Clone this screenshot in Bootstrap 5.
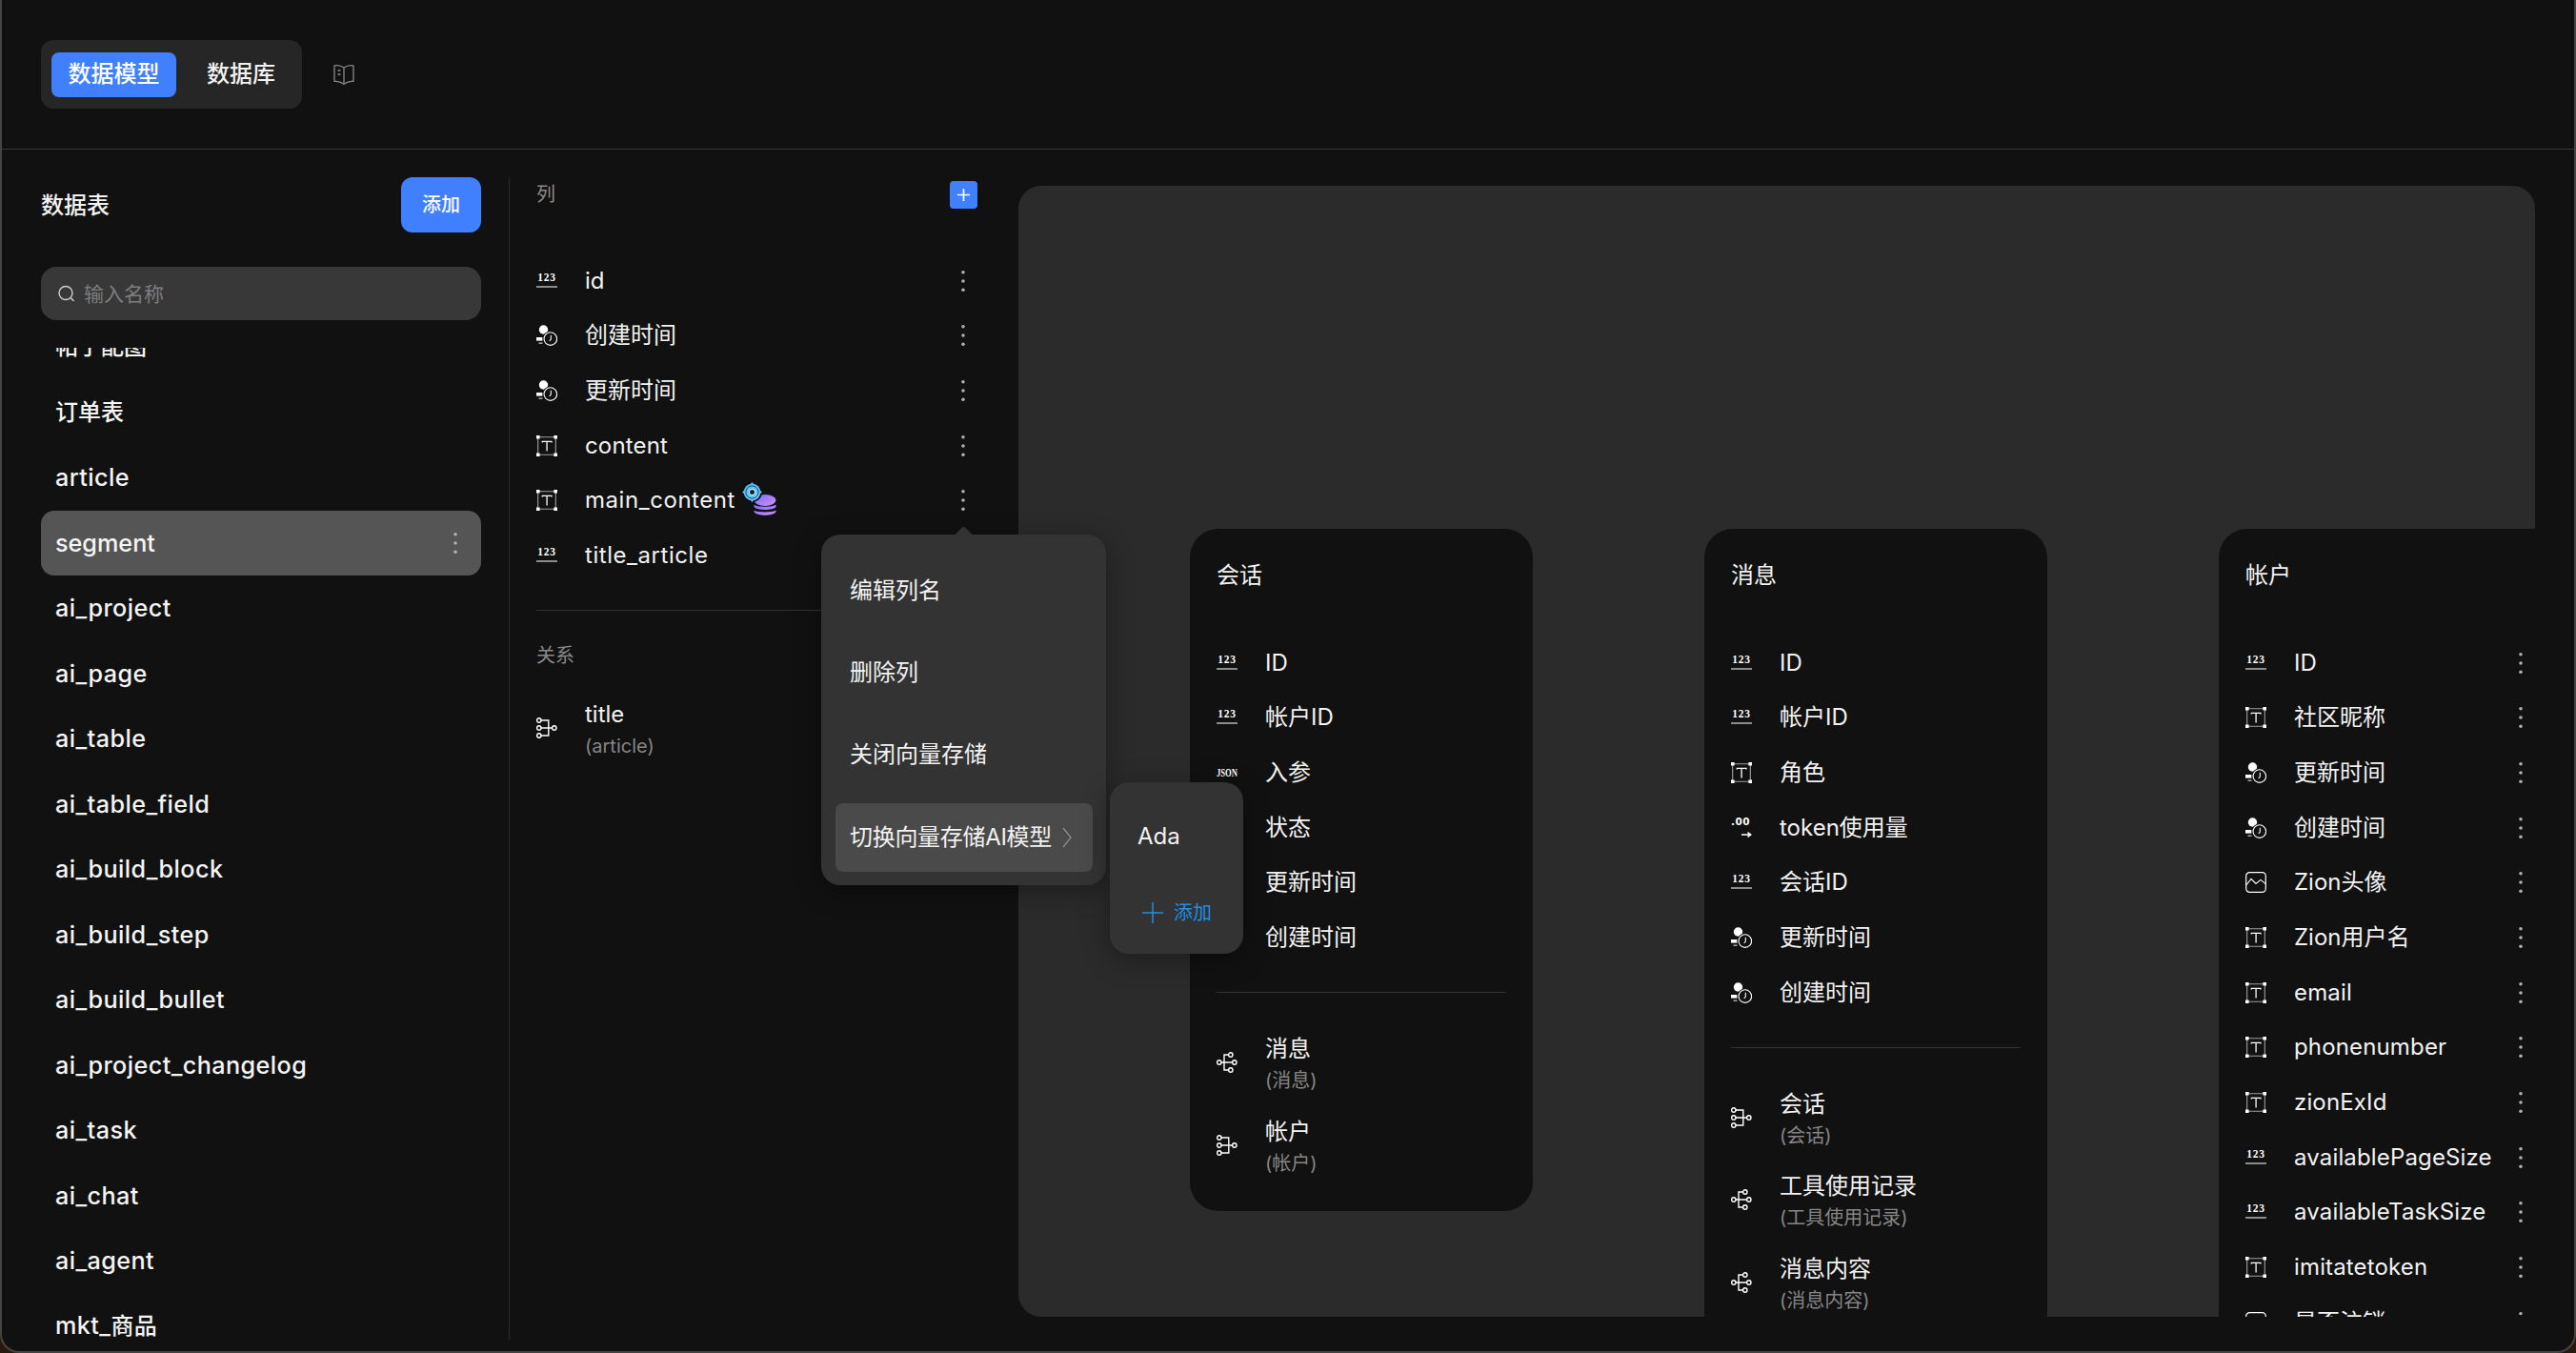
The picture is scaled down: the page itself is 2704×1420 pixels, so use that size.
<!DOCTYPE html>
<html lang="zh-CN">
<head>
<meta charset="utf-8">
<title>数据模型</title>
<link href="https://cdn.jsdelivr.net/npm/bootstrap@5.3.0/dist/css/bootstrap.min.css" rel="stylesheet">
<style>
html,body{height:100%;margin:0;overflow:hidden;background:#2a1808;}
body{font-family:Inter,"Noto Sans CJK SC",sans-serif;color:#f2f2f2;font-size:24px;line-height:34px;}
.appwin{position:relative;width:2704px;height:1420px;background:#111;border:2px solid #454545;border-top:0;border-radius:0 0 20px 20px;overflow:hidden;}
.topbar{height:157px;border-bottom:1px solid #383838;padding-left:41px;}
.segbox{width:274px;height:72px;background:#262626;border-radius:13px;padding:13px 11px;gap:0;}
.segbox .nav-link{height:47px;padding:0;font-size:24px;line-height:46px;font-weight:500;color:#f2f2f2;text-align:center;border-radius:8px;}
.segbox .nav-link.active{width:131px;background:#4080ff;color:#fff;}
.segbox .nav-link.tab-two{width:121px;padding-left:32px;text-align:left;}
.bookico{width:22px;height:22px;margin-left:33px;margin-top:-1px;}
.work{height:1261px;}
.sidepane{width:533px;flex:none;padding-top:29px;position:relative;}
.sidepane::after{content:"";position:absolute;right:0;top:0;margin-top:29px;bottom:12px;width:1px;background:#2b2b2b;}
.sidehead{margin:0 30px 0 41px;height:58px;}
.sidetitle{font-size:24px;font-weight:500;padding-top:2px;}
.btn.addbtn{width:84px;height:58px;padding:0;font-size:20px;font-weight:500;background:#4080ff;border:0;border-radius:12px;color:#fff;}
.searchbox{margin:36px 30px 0 41px;height:56px;background:#383838;border-radius:16px;padding-left:18px;gap:9px;}
.searchbox .form-control{background:transparent;border:0;padding:0;box-shadow:none;font-size:21px;color:#f2f2f2;height:55px;}
.searchbox .form-control::placeholder{color:#7d7d7d;}
.tablelist{margin:29px 30px 0 41px;height:1060px;overflow:hidden;}
.tablelist .list-group{margin-top:-35px;}
.tablelist .list-group-item{height:68.5px;background:transparent;border:0;color:#f4f4f4;padding:0 24px 0 15px;font-weight:500;font-size:25.2px;border-radius:14px;}
.tablelist .list-group-item.active{background:#555;height:68px;margin-bottom:.5px;margin-top:0;color:#f4f4f4;}
.tablelist .cjkname{font-size:24px;}
.tablelist .wide-us{letter-spacing:.42px;}
.colpane{width:534px;flex:none;padding:33px 43px 0 28px;}
.panelabel{font-size:20px;color:#8a8a8a;height:29px;line-height:29px;}
.plusbtn{width:29px;height:29px;background:#4080ff;border-radius:4px;}
.fieldrow{height:57.67px;gap:29px;}
.fieldrow .fieldname{flex:1;min-width:0;white-space:nowrap;}
.fieldname.latn{letter-spacing:.15px;}
.fieldname.wide-us{letter-spacing:.55px;}
.ico{width:22px;height:22px;flex:none;}
.dotsico{width:30px;height:22px;flex:none;}
.firstrow{margin-top:47px;}
.rule{height:1px;background:#333;opacity:1;border:0;margin:0;}
.colpane .rule{margin-top:28px;}
.rellabel{margin-top:33px;}
.relrows{margin-top:20px;}
.relrow{height:86.5px;gap:29px;}
.relrow .ico{margin-top:-5px;}
.relrow .reltitle{line-height:34px;}
.relrow .relsub{line-height:33px;font-size:20px;color:#858585;}
.vecico{width:36px;height:36px;margin-left:7px;margin-top:-6px;vertical-align:middle;}
.canvaswrap{flex:1;min-width:0;padding:38px 41px 36px 0;}
.canvasbox{height:100%;background:#2b2b2b;border-radius:24px;overflow:hidden;padding:360px 0 0 180px;gap:180px;align-items:flex-start;}
.card.modelcard{width:360px;flex:none;background:#111;border:0;border-radius:30px;padding:31px 28px 24px;color:#f2f2f2;}
.modeltitle{height:34px;line-height:36px;font-size:24px;margin-bottom:47px;}
.modelcard .rule{margin:28px 0 32.5px;}
.dropdown-menu.popmain{display:block;position:absolute;left:860px;top:561px;width:299px;height:368px;min-width:0;background:#333;border:0;border-radius:20px;padding:23px 14px 15px 15px;margin:0;box-shadow:0 6px 28px rgba(0,0,0,.35);}
.dropdown-menu.popmain::before{content:"";position:absolute;left:142px;top:-6px;width:15px;height:15px;background:#333;transform:rotate(45deg);border-radius:3px;}
.popmain .dropdown-item,.popsub .dropdown-item{color:#f2f2f2;font-size:24px;padding:0 0 0 15px;height:72px;margin-bottom:14.2px;border-radius:8px;background:transparent;}
.popmain .dropdown-item:last-child{margin-bottom:0;background:#4a4a4a;position:relative;letter-spacing:-.3px;}
.popchev{width:10px;height:22px;margin-left:11px;}
.dropdown-menu.popsub{display:block;position:absolute;left:1163px;top:821px;width:140px;height:180px;min-width:0;background:#333;border:0;border-radius:20px;padding:21px 0 0;margin:0;box-shadow:0 6px 28px rgba(0,0,0,.35);}
.popsub .dropdown-item{padding-left:29px;height:72px;margin:0;}
.popsub .addline{height:60px;margin-top:14px;padding-left:34px;gap:11px;color:#1e8fe6;font-size:20px;}
.plusthin{width:22px;height:22px;}
</style>
</head>
<body>
<svg width="0" height="0" class="position-absolute">
<defs>
<linearGradient id="gradPurple" x1="0" y1="0" x2="1" y2="1"><stop offset="0" stop-color="#7d6cff"/><stop offset="1" stop-color="#cf90ff"/></linearGradient>
<linearGradient id="gradBlue" x1="0" y1="0" x2="1" y2="1"><stop offset="0" stop-color="#56b7f5"/><stop offset="1" stop-color="#6fd0ff"/></linearGradient>
<symbol id="i-num" viewBox="0 0 22 22"><text x="11" y="11" text-anchor="middle" font-family="Liberation Serif,serif" font-weight="700" font-size="11.5" letter-spacing=".8" fill="#fff">123</text><rect x="0" y="16.4" width="22" height="1.2" fill="#ddd"/></symbol>
<symbol id="i-json" viewBox="0 0 22 22"><text x="0" y="15" textLength="22" lengthAdjust="spacingAndGlyphs" font-family="Liberation Serif,serif" font-weight="700" font-size="11.5" fill="#fff">JSON</text></symbol>
<symbol id="i-text" viewBox="0 0 22 22"><path d="M1.7 1.700H20.300V20.300H1.700Z" fill="none" stroke="#a0a0a0" stroke-width="1.1"/><path d="M0 0h3.600v3.600H0zM18.400 0H22v3.600h-3.600zM0 18.400h3.600V22H0zM18.400 18.400H22V22h-3.600z" fill="#fff"/><path d="M6.300 7.600V6.400H16V7.600M11.100 6.400V16.600" fill="none" stroke="#fff" stroke-width="1.300"/></symbol>
<symbol id="i-time" viewBox="0 0 22 22"><circle cx="7.500" cy="5" r="4.700" fill="#fff"/><rect x="0" y="13" width="6.500" height="3.600" fill="#fff"/><rect x="2.500" y="18.600" width="4" height="1.100" fill="#ddd"/><circle cx="14.800" cy="14.600" r="8.200" fill="#111"/><circle cx="14.800" cy="14.600" r="6.800" fill="none" stroke="#fff" stroke-width="1.100"/><path d="M15.300 10.800V15L13.700 17" fill="none" stroke="#fff" stroke-width="1.100"/></symbol>
<symbol id="i-dec" viewBox="0 0 22 22"><text x="0" y="8.400" font-family="DejaVu Sans,sans-serif" font-weight="700" font-size="10.500" letter-spacing=".5" fill="#fff">.00</text><path d="M11 18H20.500M17.500 15.600 20.800 18 17.500 20.400" fill="none" stroke="#fff" stroke-width="1.500"/></symbol>
<symbol id="i-img" viewBox="0 0 22 22"><rect x=".7" y=".7" width="20.600" height="20.600" rx="3.600" fill="none" stroke="#fff" stroke-width="1.200"/><path d="M.8 14 6 7.400 11 12.400 16 8.400 21.200 12.600" fill="none" stroke="#fff" stroke-width="1.100"/></symbol>
<symbol id="i-check" viewBox="0 0 22 22"><rect x=".7" y=".7" width="20.600" height="20.600" rx="3.600" fill="none" stroke="#fff" stroke-width="1.200"/></symbol>
<symbol id="i-many" viewBox="0 0 22 22"><g fill="none" stroke="#fff" stroke-width="1.400"><circle cx="2.800" cy="11" r="2.200"/><circle cx="14.800" cy="3" r="2.200"/><circle cx="18.800" cy="11" r="2.200"/><circle cx="14.800" cy="19" r="2.200"/><path d="M5 11H16.600M8 11V3H12.600M8 11V19H12.600"/></g></symbol>
<symbol id="i-one" viewBox="0 0 22 22"><g fill="none" stroke="#fff" stroke-width="1.400"><circle cx="2.800" cy="3" r="2.200"/><circle cx="2.800" cy="11" r="2.200"/><circle cx="2.800" cy="19" r="2.200"/><circle cx="18.800" cy="11" r="2.200"/><path d="M5 3H12.800V19H5M5 11H16.600"/></g></symbol>
<symbol id="i-dots" viewBox="0 0 30 22"><g fill="#b0b0b0"><circle cx="15" cy="1.800" r="1.800"/><circle cx="15" cy="11" r="1.800"/><circle cx="15" cy="20.200" r="1.800"/></g></symbol>
</defs>
</svg>

<div class="appwin">
  <header class="topbar d-flex align-items-center">
    <ul class="nav segbox flex-nowrap list-unstyled m-0">
      <li class="nav-item"><a class="nav-link active" href="#">数据模型</a></li>
      <li class="nav-item"><a class="nav-link tab-two" href="#">数据库</a></li>
    </ul>
    <svg class="bookico" viewBox="0 0 22 22" fill="none" stroke="#8a8a8a" stroke-width="1.3" stroke-linejoin="round"><path d="M11 4C8.300 2 4.500 1.200 1 1.800V18.400C4.500 18 8 19 11 21.200 14 19 17.500 18 21 18.400V1.800C17.500 1.200 13.700 2 11 4ZM11 4V21.200"/><path d="M4.500 7H7.500M4.500 11H7.500"/></svg>
  </header>

  <div class="work d-flex">
    <aside class="sidepane">
      <div class="sidehead d-flex align-items-center justify-content-between">
        <span class="sidetitle">数据表</span>
        <button type="button" class="btn addbtn">添加</button>
      </div>
      <div class="searchbox d-flex align-items-center">
        <svg width="18" height="18" viewBox="0 0 18 18" fill="none" stroke="#d0d0d0" stroke-width="1.4" class="flex-shrink-0"><circle cx="8" cy="8.500" r="7"/><path d="M13.200 13.500 16.500 17"/></svg>
        <input class="form-control" type="text" placeholder="输入名称">
      </div>
      <div class="tablelist">
        <div class="list-group">
          <div class="list-group-item d-flex align-items-center"><span class="cjkname">帖子配图</span></div>
          <div class="list-group-item d-flex align-items-center"><span class="cjkname">订单表</span></div>
          <div class="list-group-item d-flex align-items-center wide-us">article</div>
          <div class="list-group-item active d-flex align-items-center justify-content-between">segment<svg width="6" height="22" viewBox="12 0 6 22"><use href="#i-dots" width="30" height="22"/></svg></div>
          <div class="list-group-item d-flex align-items-center wide-us">ai_project</div>
          <div class="list-group-item d-flex align-items-center wide-us">ai_page</div>
          <div class="list-group-item d-flex align-items-center wide-us">ai_table</div>
          <div class="list-group-item d-flex align-items-center wide-us">ai_table_field</div>
          <div class="list-group-item d-flex align-items-center wide-us">ai_build_block</div>
          <div class="list-group-item d-flex align-items-center wide-us">ai_build_step</div>
          <div class="list-group-item d-flex align-items-center wide-us">ai_build_bullet</div>
          <div class="list-group-item d-flex align-items-center wide-us">ai_project_changelog</div>
          <div class="list-group-item d-flex align-items-center wide-us">ai_task</div>
          <div class="list-group-item d-flex align-items-center wide-us">ai_chat</div>
          <div class="list-group-item d-flex align-items-center wide-us">ai_agent</div>
          <div class="list-group-item d-flex align-items-center wide-us"><span>mkt_<span class="cjkname">商品</span></span></div>
        </div>
      </div>
    </aside>

    <section class="colpane">
      <div class="d-flex justify-content-between align-items-center">
        <span class="panelabel">列</span>
        <span class="plusbtn d-flex align-items-center justify-content-center"><svg width="13" height="13" viewBox="0 0 13 13" stroke="#fff" stroke-width="1.7"><path d="M6.500 0V13M0 6.500H13"/></svg></span>
      </div>
      <div class="firstrow">
        <div class="fieldrow d-flex align-items-center"><svg class="ico"><use href="#i-num"/></svg><span class="fieldname">id</span><svg class="dotsico"><use href="#i-dots"/></svg></div>
        <div class="fieldrow d-flex align-items-center"><svg class="ico"><use href="#i-time"/></svg><span class="fieldname">创建时间</span><svg class="dotsico"><use href="#i-dots"/></svg></div>
        <div class="fieldrow d-flex align-items-center"><svg class="ico"><use href="#i-time"/></svg><span class="fieldname">更新时间</span><svg class="dotsico"><use href="#i-dots"/></svg></div>
        <div class="fieldrow d-flex align-items-center"><svg class="ico"><use href="#i-text"/></svg><span class="fieldname latn">content</span><svg class="dotsico"><use href="#i-dots"/></svg></div>
        <div class="fieldrow d-flex align-items-center"><svg class="ico"><use href="#i-text"/></svg><span class="fieldname wide-us">main_content<svg class="vecico" viewBox="0 0 36 36"><ellipse cx="24" cy="19" rx="11.500" ry="6" fill="url(#gradPurple)"/><path d="M12.500 23.500C15 26.500 33 26.500 35.500 23.500V26C33 30 15 30 12.500 26ZM12.500 29.500C15 32 33 32 35.500 29.500V31C33 36 15 36 12.500 31Z" fill="url(#gradPurple)"/><circle cx="10.500" cy="10.500" r="10.500" fill="#111"/><circle cx="10.500" cy="10.500" r="8.800" fill="url(#gradBlue)"/><path d="M10.500 0 13 3H8ZM10.500 21 13 18H8ZM0 10.500 3 8V13ZM21 10.500 18 8V13Z" fill="#5cbcf5"/><circle cx="10.500" cy="10.500" r="6.600" fill="none" stroke="#1d4a68" stroke-width="1"/><circle cx="10.500" cy="10.500" r="3.500" fill="#cfeeff"/><circle cx="10.500" cy="10.500" r="2.500" fill="#122230"/></svg></span><svg class="dotsico"><use href="#i-dots"/></svg></div>
        <div class="fieldrow d-flex align-items-center"><svg class="ico"><use href="#i-num"/></svg><span class="fieldname wide-us">title_article</span></div>
      </div>
      <hr class="rule">
      <div class="panelabel rellabel">关系</div>
      <div class="relrows">
        <div class="relrow d-flex align-items-center"><svg class="ico"><use href="#i-one"/></svg><div><div class="reltitle">title</div><div class="relsub">(article)</div></div></div>
      </div>
    </section>

    <main class="canvaswrap">
      <div class="canvasbox d-flex">
        <div class="card modelcard">
          <div class="modeltitle">会话</div>
          <div class="fieldrow d-flex align-items-center"><svg class="ico"><use href="#i-num"/></svg><span class="fieldname">ID</span></div>
          <div class="fieldrow d-flex align-items-center"><svg class="ico"><use href="#i-num"/></svg><span class="fieldname">帐户ID</span></div>
          <div class="fieldrow d-flex align-items-center"><svg class="ico"><use href="#i-json"/></svg><span class="fieldname">入参</span></div>
          <div class="fieldrow d-flex align-items-center"><svg class="ico"></svg><span class="fieldname">状态</span></div>
          <div class="fieldrow d-flex align-items-center"><svg class="ico"></svg><span class="fieldname">更新时间</span></div>
          <div class="fieldrow d-flex align-items-center"><svg class="ico"></svg><span class="fieldname">创建时间</span></div>
          <hr class="rule">
          <div class="relrow d-flex align-items-center"><svg class="ico"><use href="#i-many"/></svg><div><div class="reltitle">消息</div><div class="relsub">(消息)</div></div></div>
          <div class="relrow d-flex align-items-center"><svg class="ico"><use href="#i-one"/></svg><div><div class="reltitle">帐户</div><div class="relsub">(帐户)</div></div></div>
        </div>

        <div class="card modelcard">
          <div class="modeltitle">消息</div>
          <div class="fieldrow d-flex align-items-center"><svg class="ico"><use href="#i-num"/></svg><span class="fieldname">ID</span></div>
          <div class="fieldrow d-flex align-items-center"><svg class="ico"><use href="#i-num"/></svg><span class="fieldname">帐户ID</span></div>
          <div class="fieldrow d-flex align-items-center"><svg class="ico"><use href="#i-text"/></svg><span class="fieldname">角色</span></div>
          <div class="fieldrow d-flex align-items-center"><svg class="ico"><use href="#i-dec"/></svg><span class="fieldname">token使用量</span></div>
          <div class="fieldrow d-flex align-items-center"><svg class="ico"><use href="#i-num"/></svg><span class="fieldname">会话ID</span></div>
          <div class="fieldrow d-flex align-items-center"><svg class="ico"><use href="#i-time"/></svg><span class="fieldname">更新时间</span></div>
          <div class="fieldrow d-flex align-items-center"><svg class="ico"><use href="#i-time"/></svg><span class="fieldname">创建时间</span></div>
          <hr class="rule">
          <div class="relrow d-flex align-items-center"><svg class="ico"><use href="#i-one"/></svg><div><div class="reltitle">会话</div><div class="relsub">(会话)</div></div></div>
          <div class="relrow d-flex align-items-center"><svg class="ico"><use href="#i-many"/></svg><div><div class="reltitle">工具使用记录</div><div class="relsub">(工具使用记录)</div></div></div>
          <div class="relrow d-flex align-items-center"><svg class="ico"><use href="#i-many"/></svg><div><div class="reltitle">消息内容</div><div class="relsub">(消息内容)</div></div></div>
        </div>

        <div class="card modelcard">
          <div class="modeltitle">帐户</div>
          <div class="fieldrow d-flex align-items-center"><svg class="ico"><use href="#i-num"/></svg><span class="fieldname">ID</span><svg class="dotsico"><use href="#i-dots"/></svg></div>
          <div class="fieldrow d-flex align-items-center"><svg class="ico"><use href="#i-text"/></svg><span class="fieldname">社区昵称</span><svg class="dotsico"><use href="#i-dots"/></svg></div>
          <div class="fieldrow d-flex align-items-center"><svg class="ico"><use href="#i-time"/></svg><span class="fieldname">更新时间</span><svg class="dotsico"><use href="#i-dots"/></svg></div>
          <div class="fieldrow d-flex align-items-center"><svg class="ico"><use href="#i-time"/></svg><span class="fieldname">创建时间</span><svg class="dotsico"><use href="#i-dots"/></svg></div>
          <div class="fieldrow d-flex align-items-center"><svg class="ico"><use href="#i-img"/></svg><span class="fieldname">Zion头像</span><svg class="dotsico"><use href="#i-dots"/></svg></div>
          <div class="fieldrow d-flex align-items-center"><svg class="ico"><use href="#i-text"/></svg><span class="fieldname">Zion用户名</span><svg class="dotsico"><use href="#i-dots"/></svg></div>
          <div class="fieldrow d-flex align-items-center"><svg class="ico"><use href="#i-text"/></svg><span class="fieldname latn">email</span><svg class="dotsico"><use href="#i-dots"/></svg></div>
          <div class="fieldrow d-flex align-items-center"><svg class="ico"><use href="#i-text"/></svg><span class="fieldname latn">phonenumber</span><svg class="dotsico"><use href="#i-dots"/></svg></div>
          <div class="fieldrow d-flex align-items-center"><svg class="ico"><use href="#i-text"/></svg><span class="fieldname latn">zionExId</span><svg class="dotsico"><use href="#i-dots"/></svg></div>
          <div class="fieldrow d-flex align-items-center"><svg class="ico"><use href="#i-num"/></svg><span class="fieldname latn">availablePageSize</span><svg class="dotsico"><use href="#i-dots"/></svg></div>
          <div class="fieldrow d-flex align-items-center"><svg class="ico"><use href="#i-num"/></svg><span class="fieldname latn">availableTaskSize</span><svg class="dotsico"><use href="#i-dots"/></svg></div>
          <div class="fieldrow d-flex align-items-center"><svg class="ico"><use href="#i-text"/></svg><span class="fieldname latn">imitatetoken</span><svg class="dotsico"><use href="#i-dots"/></svg></div>
          <div class="fieldrow d-flex align-items-center"><svg class="ico"><use href="#i-check"/></svg><span class="fieldname">是否注销</span><svg class="dotsico"><use href="#i-dots"/></svg></div>
        </div>
      </div>
    </main>
  </div>

  <div class="dropdown-menu popmain">
    <a class="dropdown-item d-flex align-items-center" href="#">编辑列名</a>
    <a class="dropdown-item d-flex align-items-center" href="#">删除列</a>
    <a class="dropdown-item d-flex align-items-center" href="#">关闭向量存储</a>
    <a class="dropdown-item d-flex align-items-center" href="#">切换向量存储AI模型<svg class="popchev" viewBox="0 0 10 22" fill="none" stroke="#8c8c8c" stroke-width="1.3"><path d="M1 1 9 11 1 21"/></svg></a>
  </div>
  <div class="dropdown-menu popsub">
    <a class="dropdown-item d-flex align-items-center" href="#">Ada</a>
    <div class="addline d-flex align-items-center"><svg class="plusthin flex-shrink-0" viewBox="0 0 22 22" stroke="#1e8fe6" stroke-width="1.5"><path d="M11 0V22M0 11H22"/></svg><span>添加</span></div>
  </div>
</div>
<script src="https://cdn.jsdelivr.net/npm/bootstrap@5.3.0/dist/js/bootstrap.bundle.min.js"></script>
</body>
</html>
